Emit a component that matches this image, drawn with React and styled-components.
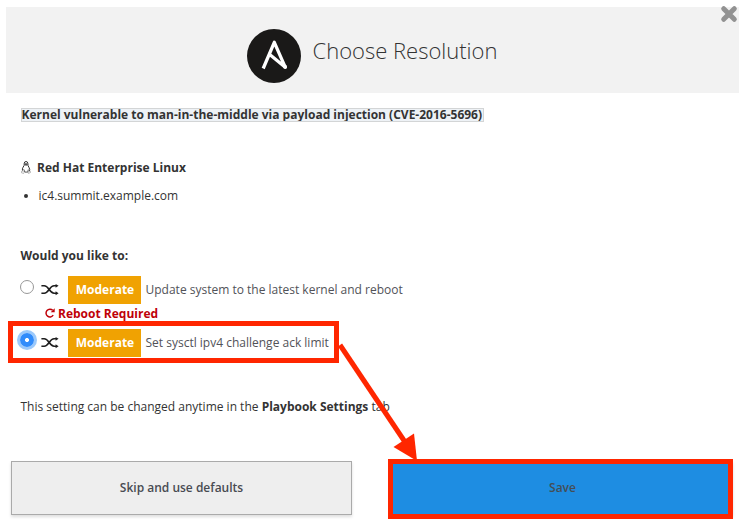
import React from 'react';
import styled, { createGlobalStyle } from 'styled-components';

const Global = createGlobalStyle`
  * { box-sizing: border-box; }
  body { margin: 0; background: #fff; font-family: "Open Sans", "Noto Sans", sans-serif; font-size: 12px; color: #333; }
`;

const Dialog = styled.main`
  position: relative;
  width: 744px;
  height: 528px;
  padding: 7px 5px 0 6px;
  overflow: hidden;
  white-space: nowrap;
`;
const Header = styled.header`
  height: 86px;
  display: flex;
  align-items: flex-start;
  padding: 22px 0 0 241px;
  gap: 11.5px;
  background: #f2f2f2;
`;
const Heading = styled.h1`
  margin: 5px 0 0;
  font-size: 22px;
  line-height: 32px;
  font-weight: 300;
`;
const Close = styled.button`
  position: absolute;
  left: 720px;
  top: 5px;
  width: 18px;
  height: 18px;
  padding: 0;
  border: 0;
  background: none;
  svg { display: block; }
`;
const Content = styled.section`
  height: 368px;
  padding: 15px 0 0 14.5px;
`;
const RuleTitle = styled.h2`
  width: 463px;
  height: 14px;
  margin: 0 0 0 0.5px;
  padding-left: 0.5px;
  outline: 1px solid #d3d5d6;
  outline-offset: -1px;
  background: #eef2f6;
  font-size: 12px;
  line-height: 14px;
  font-weight: 700;
`;
const Strong = styled.strong`
  font-weight: 700;
`;
const System = styled.div`
  display: flex;
  align-items: center;
  gap: 6.5px;
  height: 20px;
  margin-top: 35px;
`;
const Hosts = styled.ul`
  margin: 9px 0 0;
  padding-left: 18px;
  line-height: 20px;
`;
const Question = styled.h3`
  margin: 40px 0 0;
  font-size: 12px;
  line-height: 20px;
  font-weight: 700;
`;
const Option = styled.label`
  display: flex;
  align-items: center;
  height: 28px;
  margin-top: ${p => p.$gap}px;
`;
const Radio = styled.input`
  appearance: none;
  flex: none;
  width: 14px;
  height: 14px;
  margin: -7px 7px 0 -0.5px;
  border: 1px solid #989898;
  border-radius: 50%;
  background: #fff;
  &:checked {
    border: 0;
    background: radial-gradient(circle, #fff 0 1.7px, #318cfb 2.3px);
    box-shadow: 0 0 0 3px #9bc9fb;
  }
`;
const Badge = styled.span`
  width: 73px;
  height: 28px;
  margin: 0 4.5px 0 9px;
  padding-left: 1px;
  background: #f0a202;
  color: #fff;
  font-weight: 700;
  line-height: 27px;
  text-align: center;
`;
const Description = styled.span`
  color: #515258;
  line-height: 27px;
  height: 28px;
`;
const Reboot = styled.div`
  display: flex;
  align-items: center;
  gap: 3.5px;
  height: 18px;
  padding-left: 24px;
  color: #bf0008;
  font-weight: 700;
`;
const Note = styled.p`
  margin: 40px 0 0;
  line-height: 20px;
`;
const Actions = styled.footer`
  display: flex;
  gap: 40px;
  padding-left: 5px;
`;
const Action = styled.button`
  width: 341px;
  height: 54px;
  padding: 0 0 2px;
  border: 1px solid ${p => (p.$primary ? '#1b74b9' : '#aaa')};
  background: ${p => (p.$primary ? '#1e8de2' : '#eee')};
  color: ${p => (p.$primary ? '#444d56' : '#484b52')};
  box-shadow: 0 2px 3px #0002;
  font: 600 12px "Open Sans", sans-serif;
`;
const Highlight = styled.div`
  position: absolute;
  left: ${p => p.$x}px;
  top: ${p => p.$y}px;
  width: ${p => p.$w}px;
  height: ${p => p.$h}px;
  border: 5px solid #ff2600;
  pointer-events: none;
`;
const Arrow = styled.svg`
  position: absolute;
  left: 330px;
  top: 335px;
  pointer-events: none;
`;

const AnsibleLogo = () => (
  <svg width="54" height="54" viewBox="0 0 54 54">
    <circle cx="27" cy="27" r="27" fill="#1a1918" />
    <path d="M16.2 39.5 27.3 13.3 38.3 38.3 22.4 25.3" fill="none" stroke="#fff" strokeWidth="3.3" strokeLinejoin="round" />
    <circle cx="38" cy="37.7" r="2" fill="#fff" />
  </svg>
);
const Tux = () => (
  <svg width="10" height="13" viewBox="0 0 10 13" fill="none">
    <path d="M3.2 4.3V2.5Q3.3.5 5 .5q1.8 0 1.9 2.1l.1 1.9 1.1 2.2q1 1.8.4 3.4M1.5 9.6Q1 7.8 2.1 6.2L3.2 4.3" stroke="#333" strokeWidth="1" />
    <path d="M3.4 2.2h3.2v2L5 4.8 3.4 4Z" fill="#555" />
    <path d="m2.7 8.3 1.2 2.8h2.9l.5-2.6" stroke="#444" strokeWidth=".9" />
    <path d="m.5 10.4 1-.5 1.7 1.7-.5.8-2.2-.6Zm9 .2-1-.5L6.8 12l.6.5 2.2-1.1Z" strokeWidth=".7" stroke="#999" />
  </svg>
);
const Shuffle = () => (
  <svg width="18" height="12" viewBox="0 0 18 12">
    <path d="M.4 1.8h2.8C7.8 1.8 8.5 9.2 13 9.2h2.6M.4 9.2h2.8C7.8 9.2 8.5 1.8 13 1.8h2.6" fill="none" stroke="#1f1f1f" strokeWidth="1.6" />
    <path d="M14.6 0 17.6 1.8 14.6 3.8ZM14.6 7.2 17.6 9.2 14.6 11.2Z" fill="#1f1f1f" />
  </svg>
);
const Repeat = () => (
  <svg width="10" height="10" viewBox="0 0 10 10">
    <path d="M7.7 2.3A3.9 3.9 0 1 0 8.2 7.2" fill="none" stroke="#bf0008" strokeWidth="1.5" />
    <path d="M9.7 .2V4.2H5.7Z" fill="#bf0008" />
  </svg>
);

function Choice({ children, gap, ...input }) {
  return (
    <Option $gap={gap}>
      <Radio type="radio" name="resolution" {...input} />
      <Shuffle />
      <Badge>Moderate</Badge>
      <Description>{children}</Description>
    </Option>
  );
}

export default function App() {
  return (
    <>
      <Global />
      <Dialog>
        <Header>
          <AnsibleLogo />
          <Heading>Choose Resolution</Heading>
        </Header>
        <Close aria-label="Close">
          <svg width="18" height="18" viewBox="0 0 18 18">
            <path d="m3.7 3.7 10.6 10.6M14.3 3.7 3.7 14.3" stroke="#929292" strokeWidth="5" strokeLinecap="round" />
          </svg>
        </Close>
        <Content>
          <RuleTitle>Kernel vulnerable to man-in-the-middle via payload injection (CVE-2016-5696)</RuleTitle>
          <System><Tux /><Strong>Red Hat Enterprise Linux</Strong></System>
          <Hosts><li>ic4.summit.example.com</li></Hosts>
          <Question>Would you like to:</Question>
          <Choice gap={10}>Update system to the latest kernel and reboot</Choice>
          <Reboot><Repeat />Reboot Required</Reboot>
          <Choice gap={7} defaultChecked>Set sysctl ipv4 challenge ack limit</Choice>
          <Note>This setting can be changed anytime in the <Strong>Playbook Settings</Strong> tab</Note>
        </Content>
        <Actions>
          <Action>Skip and use defaults</Action>
          <Action $primary>Save</Action>
        </Actions>
        <Highlight $x={8} $y={321} $w={331} $h={42} />
        <Highlight $x={387.5} $y={458.5} $w={345} $h={60} />
        <Arrow width="95" height="130" viewBox="330 335 95 130">
          <path d="m340 345 65 97" stroke="#ff2600" strokeWidth="5" />
          <path d="m417 461-23.5-14 20.5-13.5Z" fill="#ff2600" />
        </Arrow>
      </Dialog>
    </>
  );
}
